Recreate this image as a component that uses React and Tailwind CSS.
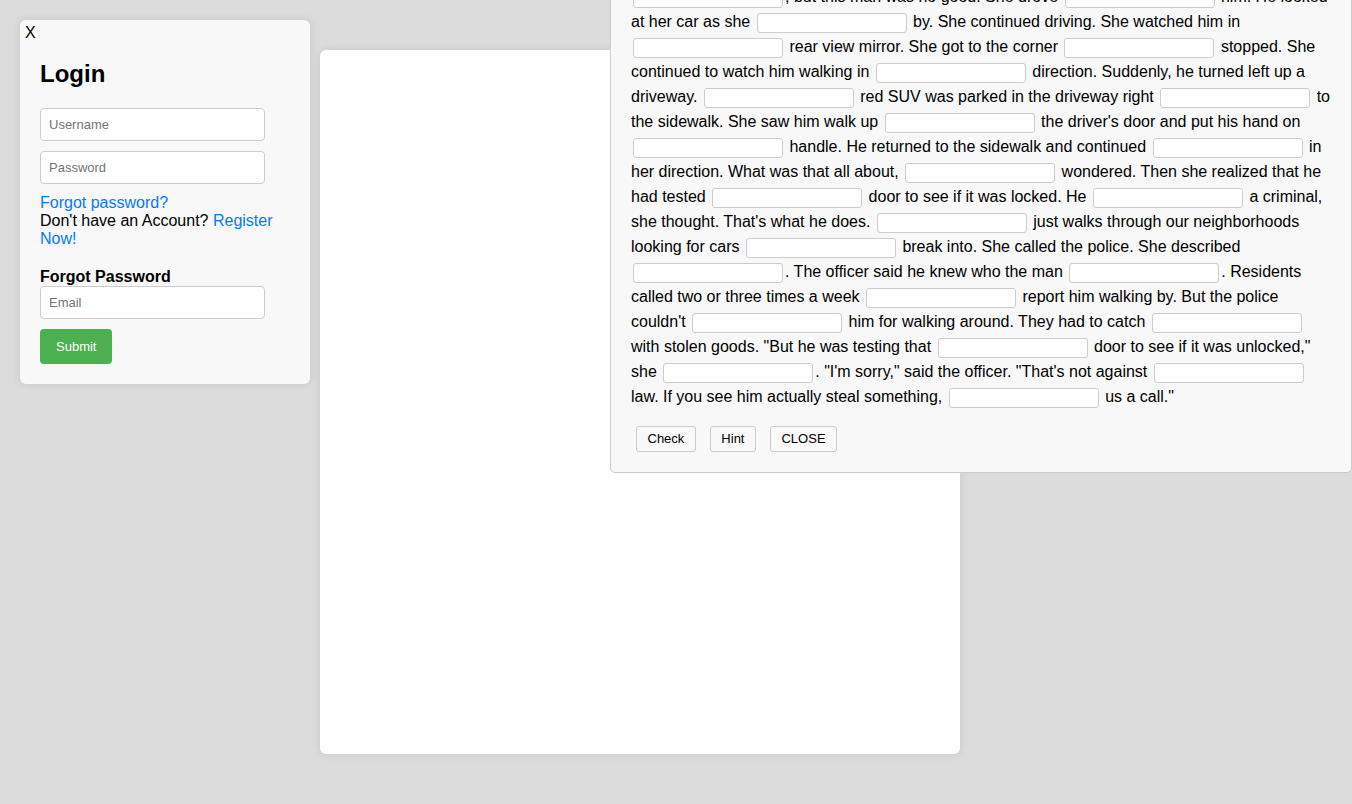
import React from "react";

// null = blank to fill in
const story = [
    null, ", but this man was no good. She drove ", null, " him. He looked at her car as she ", null,
    " by. She continued driving. She watched him in ", null, " rear view mirror. She got to the corner ", null,
    " stopped. She continued to watch him walking in ", null, " direction. Suddenly, he turned left up a driveway. ", null,
    " red SUV was parked in the driveway right ", null, " to the sidewalk. She saw him walk up ", null,
    " the driver's door and put his hand on ", null, " handle. He returned to the sidewalk and continued ", null,
    " in her direction. What was that all about, ", null, " wondered. Then she realized that he had tested ", null,
    " door to see if it was locked. He ", null, " a criminal, she thought. That's what he does. ", null,
    " just walks through our neighborhoods looking for cars ", null, " break into. She called the police. She described ", null,
    ". The officer said he knew who the man ", null, ". Residents called two or three times a week ", null,
    " report him walking by. But the police couldn't ", null, " him for walking around. They had to catch ", null,
    " with stolen goods. \"But he was testing that ", null, " door to see if it was unlocked,\" she ", null,
    ". \"I'm sorry,\" said the officer. \"That's not against ", null, " law. If you see him actually steal something, ", null,
    " us a call.\""
];

function LoginPanel() {
    return (
        <div className="relative w-[290px] shrink-0 bg-[#f8f8f8] rounded-[6px] shadow-[0_0_10px_rgba(0,0,0,0.1)] px-[20px] pt-[40px] pb-[20px]">
            <button className="absolute top-[5px] left-[5px] text-[16px] leading-4 text-black">X</button>
            <h2 className="text-[24px] font-bold leading-[normal] mb-[20px]">Login</h2>
            <input type="text" placeholder="Username" className="block w-[225px] h-[33px] px-[8px] text-[13px] bg-white border border-[#ccc] rounded-[4px] placeholder:text-[#757575]" />
            <input type="password" placeholder="Password" className="block w-[225px] h-[33px] px-[8px] mt-[10px] text-[13px] bg-white border border-[#ccc] rounded-[4px] placeholder:text-[#757575]" />
            <div className="mt-[10px] text-[16px] leading-[normal]">
                <a href="#" className="block text-[#007bff]">Forgot password?</a>
                <div>Don't have an Account? <a href="#" className="text-[#007bff]">Register Now!</a></div>
            </div>
            <div className="mt-[20px] text-[16px] font-bold leading-[normal]">Forgot Password</div>
            <input type="email" placeholder="Email" className="block w-[225px] h-[33px] px-[8px] text-[13px] bg-white border border-[#ccc] rounded-[4px] placeholder:text-[#757575]" />
            <button className="mt-[10px] h-[35px] px-[16px] text-[13px] text-white bg-[#4caf50] rounded-[4px]">Submit</button>
        </div>
    );
}

function QuizPanel() {
    return (
        <div className="absolute left-[610px] top-[-37px] w-[742px] bg-[#f8f8f8] border border-[#ccc] rounded-[5px] p-[20px]">
            <div className="text-[16px] leading-[25px] text-black">
                {story.map((part, i) =>
                    part === null
                        ? <input key={i} type="text" className="inline-block align-middle w-[150px] h-[20px] mx-[2px] bg-white border border-[#ccc] rounded-[3px]" />
                        : <span key={i}>{part}</span>
                )}
            </div>
            <div className="flex gap-[14px] pl-[5px] mt-[17px]">
                <button className="h-[26px] px-[10.5px] text-[13px] bg-[#f8f8f8] border border-[#ccc] rounded-[3px]">Check</button>
                <button className="h-[26px] px-[10.5px] text-[13px] bg-[#f8f8f8] border border-[#ccc] rounded-[3px]">Hint</button>
                <button className="h-[26px] px-[10.5px] text-[13px] bg-[#f8f8f8] border border-[#ccc] rounded-[3px]">CLOSE</button>
            </div>
        </div>
    );
}

export default function App() {
    return (
        <div className="relative min-h-[804px] h-[804px] overflow-hidden bg-[#dcdcdc] font-['Liberation_Sans',Arial,sans-serif] text-black">
            <div className="flex items-start gap-[10px] p-[20px]">
                <LoginPanel />
                <div className="mt-[30px] w-[640px] h-[704px] bg-white rounded-[6px] shadow-[0_0_10px_rgba(0,0,0,0.1)]"></div>
            </div>
            <QuizPanel />
        </div>
    );
}
